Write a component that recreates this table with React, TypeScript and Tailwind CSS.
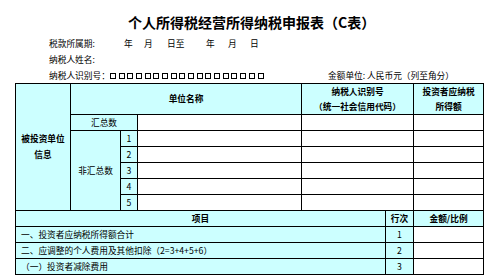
const font = { fontFamily: '"Noto Sans CJK SC", "Liberation Sans", sans-serif' };

const cell = "border border-black p-0 align-middle";
const cyan = "bg-[#ccffff]";

function Boxes({ count }: { count: number }) {
  return (
    <span className="inline-flex items-center gap-[2.7px] align-middle">
      {Array.from({ length: count }).map((_, i) => (
        <span key={i} className="inline-block w-[6px] h-[6px] border border-black" />
      ))}
    </span>
  );
}

function App() {
  const subRows = ["1", "2", "3", "4", "5"];
  const items = [
    { label: "一、投资者应纳税所得额合计", no: "1" },
    { label: "二、应调整的个人费用及其他扣除（2=3+4+5+6）", no: "2" },
    { label: "（一）投资者减除费用", no: "3" },
  ];

  return (
    <div className="w-[499px] h-[275px] overflow-hidden bg-white text-black" style={font}>
      {/* title */}
      <div className="pt-[13px] pl-[128px] h-[36px] text-[14px] leading-[18px] font-bold">
        个人所得税经营所得纳税申报表（C表）
      </div>

      {/* header info */}
      <div className="pl-[49px] text-[8.7px] leading-[16px]">
        <div className="flex">
          <span className="w-[75px]">税款所属期:</span>
          <span className="w-[20px]">年</span>
          <span className="w-[23px]">月</span>
          <span className="w-[39px]">日至</span>
          <span className="w-[22px]">年</span>
          <span className="w-[22px]">月</span>
          <span>日</span>
        </div>
        <div>纳税人姓名:</div>
        <div className="flex items-center">
          <span className="w-[279px] whitespace-nowrap flex items-center">
            纳税人识别号：
            <Boxes count={18} />
          </span>
          <span>金额单位: 人民币元（列至角分）</span>
        </div>
      </div>

      <table className="ml-[15px] mt-[-1px] border-collapse table-fixed w-[469px] text-[8.7px] leading-[14px]">
        <colgroup>
          <col className="w-[55px]" />
          <col className="w-[50px]" />
          <col className="w-[17px]" />
          <col className="w-[164px]" />
          <col className="w-[84px]" />
          <col className="w-[28px]" />
          <col className="w-[70px]" />
        </colgroup>
        <tbody>
          <tr className="h-[30px]">
            <td rowSpan={7} className={`${cell} ${cyan} text-center font-bold leading-[16px]`}>
              被投资单位
              <br />
              信息
            </td>
            <td colSpan={3} className={`${cell} ${cyan} text-center font-bold`}>单位名称</td>
            <td colSpan={2} className={`${cell} ${cyan} text-center font-bold leading-[15px]`}>
              纳税人识别号
              <br />
              （统一社会信用代码）
            </td>
            <td className={`${cell} ${cyan} text-center font-bold leading-[15px]`}>
              投资者应纳税
              <br />
              所得额
            </td>
          </tr>
          <tr className="h-[16px]">
            <td colSpan={2} className={`${cell} ${cyan} text-center`}>汇总数</td>
            <td className={cell} />
            <td colSpan={2} className={cell} />
            <td className={cell} />
          </tr>
          {subRows.map((n, i) => (
            <tr key={n} className="h-[16px]">
              {i === 0 && (
                <td rowSpan={5} className={`${cell} ${cyan} text-center`}>非汇总数</td>
              )}
              <td className={`${cell} ${cyan} text-center`}>{n}</td>
              <td className={cell} />
              <td colSpan={2} className={cell} />
              <td className={cell} />
            </tr>
          ))}
          <tr className="h-[16px]">
            <td colSpan={5} className={`${cell} ${cyan} text-center font-bold`}>项目</td>
            <td className={`${cell} ${cyan} text-center font-bold`}>行次</td>
            <td className={`${cell} ${cyan} text-center font-bold`}>金额/比例</td>
          </tr>
          {items.map((it) => (
            <tr key={it.no} className="h-[16px]">
              <td colSpan={5} className={`${cell} ${cyan} pl-[5px] whitespace-nowrap`}>{it.label}</td>
              <td className={`${cell} ${cyan} text-center`}>{it.no}</td>
              <td className={cell} />
            </tr>
          ))}
        </tbody>
      </table>
    </div>
  );
}

export default App;
